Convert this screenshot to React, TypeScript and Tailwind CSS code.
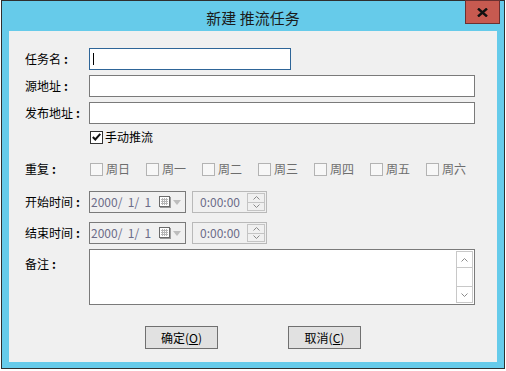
const DAYS = ["周日", "周一", "周二", "周三", "周四", "周五", "周六"];

const font = "font-['Microsoft_YaHei','Noto_Sans_CJK_SC',sans-serif]";

function Label({ text, className = "" }: { text: string; className?: string }) {
  return (
    <div className={`w-[64px] shrink-0 text-[12px] leading-[16px] text-black ${className}`}>
      {text}
      <span className="ml-[3px] font-bold">:</span>
    </div>
  );
}

function Chevron({ up }: { up?: boolean }) {
  return (
    <svg width="7" height="4" viewBox="0 0 7 4" className="block">
      <polyline
        points={up ? "0.5,3.5 3.5,0.5 6.5,3.5" : "0.5,0.5 3.5,3.5 6.5,0.5"}
        fill="none"
        stroke="#8a8a8a"
        strokeWidth="1"
      />
    </svg>
  );
}

function CalendarIcon() {
  return (
    <svg width="12" height="12" viewBox="0 0 12 12" className="block">
      <rect x="0.5" y="0.5" width="10" height="10" fill="#fff" stroke="#6a6a6a" />
      <line x1="11.5" y1="1" x2="11.5" y2="12" stroke="#9a9a9a" />
      <line x1="1" y1="11.5" x2="12" y2="11.5" stroke="#9a9a9a" />
      <g stroke="#b5b5b5" strokeWidth="1">
        <line x1="2" y1="3.5" x2="9" y2="3.5" />
        <line x1="2" y1="5.5" x2="9" y2="5.5" />
        <line x1="2" y1="7.5" x2="9" y2="7.5" />
        <line x1="3.5" y1="2" x2="3.5" y2="9" />
        <line x1="5.5" y1="2" x2="5.5" y2="9" />
        <line x1="7.5" y1="2" x2="7.5" y2="9" />
      </g>
    </svg>
  );
}

function DateTimeRow({ label, className = "" }: { label: string; className?: string }) {
  return (
    <div className={`flex items-center ${className}`}>
      <Label text={label} />
      <div className="flex h-[22px] w-[97px] items-center border border-[#7a7a7a] bg-[#f0f0f0] pl-[1px]">
        <span className="text-[12px] leading-[16px] text-[#6c6c88] whitespace-pre">2000/  1/  1</span>
        <div className="ml-auto mr-[4px] flex items-center gap-[2px]">
          <CalendarIcon />
          <svg width="8" height="5" viewBox="0 0 8 5" className="block">
            <polygon points="0,0 8,0 4,5" fill="#bdbdbd" />
          </svg>
        </div>
      </div>
      <div className="ml-[6px] flex h-[22px] w-[75px] items-center border border-[#b9b9b9] bg-[#f0f0f0]">
        <span className="ml-[7px] text-[12px] leading-[16px] text-[#6c6c88]">0:00:00</span>
        <div className="ml-auto mr-[1px] flex h-[18px] w-[18px] flex-col">
          <div className="flex flex-1 items-center justify-center border border-[#c4c4c4]">
            <Chevron up />
          </div>
          <div className="flex flex-1 items-center justify-center border border-t-0 border-[#c4c4c4]">
            <Chevron />
          </div>
        </div>
      </div>
    </div>
  );
}

export default function App() {
  return (
    <div className={`min-h-screen bg-white pl-px ${font}`}>
      <div className="relative flex h-[369px] w-[504px] flex-col border border-[#2f2f2f] bg-[#66cbea]">
        {/* Title bar */}
        <div className="flex h-[30px] shrink-0 items-center justify-center pt-[3px]">
          <span className="text-[15px] leading-[20px] text-[#1b1b1b]">新建 推流任务</span>
        </div>
        <button className="absolute right-[4px] top-[-1px] flex h-[24px] w-[35px] items-center justify-center border border-[#6b3030] bg-[#c75a50]">
          <svg width="11" height="9" viewBox="0 0 11 9" className="block">
            <path d="M1 0.5 L10 8.5 M10 0.5 L1 8.5" stroke="#111" strokeWidth="2.4" />
          </svg>
        </button>

        {/* Client area */}
        <div className="mx-[7px] mb-[6px] flex flex-1 flex-col bg-[#f0f0f0] pl-[16px]">
          <div className="mt-[17px] flex items-center">
            <Label text="任务名" />
            <div className="flex h-[22px] w-[202px] items-center border border-[#2e6598] bg-white pl-[3px]">
              <div className="h-[12px] w-px bg-black" />
            </div>
          </div>
          <div className="mt-[5px] flex items-center">
            <Label text="源地址" />
            <div className="h-[22px] w-[386px] border border-[#7a7a7a] bg-white" />
          </div>
          <div className="mt-[5px] flex items-center">
            <Label text="发布地址" />
            <div className="h-[22px] w-[386px] border border-[#7a7a7a] bg-white" />
          </div>

          <div className="mt-[5px] flex h-[16px] items-center pl-[65px]">
            <div className="flex h-[13px] w-[13px] items-center justify-center border border-[#333] bg-white">
              <svg width="9" height="8" viewBox="0 0 9 8" className="block">
                <polyline points="0.8,4 3.3,6.5 8.3,0.8" fill="none" stroke="#111" strokeWidth="2" />
              </svg>
            </div>
            <span className="ml-[2px] text-[12px] leading-[16px] text-black">手动推流</span>
          </div>

          <div className="mt-[16px] flex h-[16px] items-center">
            <Label text="重复" />
            <div className="ml-px flex">
              {DAYS.map((d) => (
                <div key={d} className="flex w-[56px] items-center">
                  <div className="h-[13px] w-[13px] border border-[#b3b3b3] bg-[#f7f7f7]" />
                  <span className="ml-[3px] text-[12px] leading-[16px] text-[#6d6d6d]">{d}</span>
                </div>
              ))}
            </div>
          </div>

          <DateTimeRow label="开始时间" className="mt-[14px]" />
          <DateTimeRow label="结束时间" className="mt-[9px]" />

          <div className="mt-[5px] flex items-start">
            <Label text="备注" className="pt-[7px]" />
            <div className="flex h-[56px] w-[386px] border border-[#7a7a7a] bg-white">
              <div className="flex-1" />
              <div className="my-px mr-px flex w-[17px] flex-col border border-[#c8c8c8]">
                <div className="flex h-[16px] items-center justify-center border-b border-[#c8c8c8]">
                  <Chevron up />
                </div>
                <div className="flex-1" />
                <div className="flex h-[16px] items-center justify-center border-t border-[#c8c8c8]">
                  <Chevron />
                </div>
              </div>
            </div>
          </div>

          <div className="mt-[21px] flex justify-center gap-[70px] pr-[16px]">
            <button className="flex h-[23px] w-[73px] items-center justify-center border border-[#707070] bg-[#e1e1e1] text-[12px] leading-[16px] text-black">
              确定(<span className="underline">O</span>)
            </button>
            <button className="flex h-[23px] w-[73px] items-center justify-center border border-[#707070] bg-[#e1e1e1] text-[12px] leading-[16px] text-black">
              取消(<span className="underline">C</span>)
            </button>
          </div>
        </div>
      </div>
    </div>
  );
}
